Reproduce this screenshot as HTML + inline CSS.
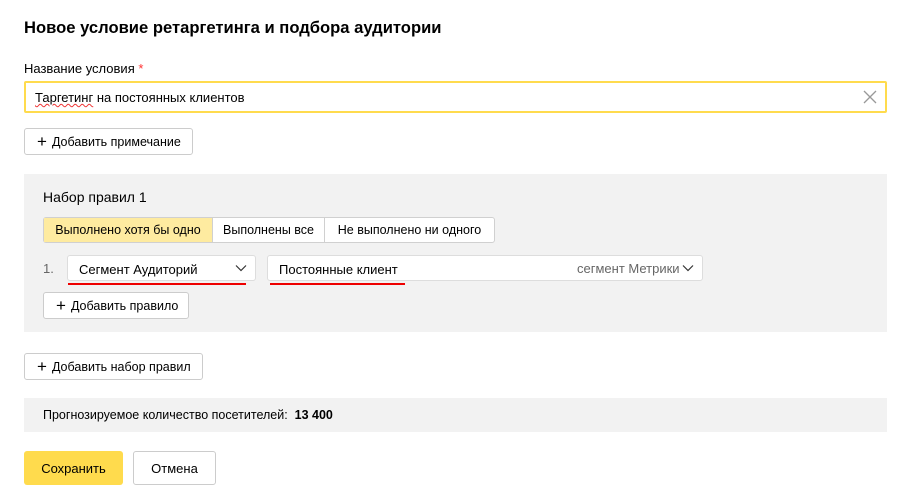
<!DOCTYPE html>
<html><head><meta charset="utf-8"><style>
*{box-sizing:border-box;margin:0;padding:0}
body{width:900px;height:494px;background:#fff;font-family:"Liberation Sans","Noto Sans CJK SC",sans-serif;color:#000;position:relative;overflow:hidden;font-size:13px}
.a{position:absolute;white-space:nowrap}
.btn{position:absolute;border:1px solid #ccc;border-radius:3px;background:#fff;display:flex;align-items:center;padding-left:12px;font-size:12.5px}
.btn .p{font-size:17px;margin-right:5px;line-height:1}
</style></head><body>
<div class="a" style="left:24px;top:18px;font-size:16.6px;font-weight:bold">Новое условие ретаргетинга и подбора аудитории</div>
<div class="a" style="left:24px;top:61px;font-size:13px">Название условия <span style="color:#f33">*</span></div>
<div class="a" style="left:24px;top:81px;width:863px;height:32px;border:2px solid #ffdb4d;border-radius:2px"></div>
<div class="a" style="left:35px;top:90px;font-size:13px"><span style="text-decoration:underline wavy #e33;text-decoration-thickness:1px">Таргетинг</span> на постоянных клиентов</div>
<svg class="a" style="left:863px;top:90px" width="14" height="14"><path d="M1 1L13 13M13 1L1 13" stroke="#999" stroke-width="1.3"/></svg>
<div class="btn" style="left:24px;top:128px;width:169px;height:27px"><span class="p">+</span>Добавить примечание</div>

<div class="a" style="left:24px;top:174px;width:863px;height:158px;background:#f2f2f2"></div>
<div class="a" style="left:43px;top:189px;font-size:14px">Набор правил 1</div>
<div class="a" style="left:43px;top:217px;width:452px;height:26px;border:1px solid #d0d0d0;border-radius:3px;background:#fff;display:flex;font-size:12.5px">
<div style="width:169px;background:#feeba0;display:flex;align-items:center;justify-content:center;border-right:1px solid #d0d0d0">Выполнено хотя бы одно</div>
<div style="width:112px;display:flex;align-items:center;justify-content:center;border-right:1px solid #d0d0d0">Выполнены все</div>
<div style="flex:1;display:flex;align-items:center;justify-content:center">Не выполнено ни одного</div>
</div>
<div class="a" style="left:43px;top:261px;color:#666">1.</div>
<div class="a" style="left:67px;top:255px;width:189px;height:26px;border:1px solid #ddd;border-radius:3px;background:#fff;padding:6px 0 0 11px">Сегмент Аудиторий</div>
<svg class="a" style="left:235px;top:264px" width="12" height="8"><path d="M1 1.5L6 6.5L11 1.5" stroke="#333" fill="none" stroke-width="1.2"/></svg>
<div class="a" style="left:267px;top:255px;width:436px;height:26px;border:1px solid #ddd;border-radius:3px;background:#fff;padding:6px 0 0 11px">Постоянные клиент</div>
<div class="a" style="left:577px;top:261px;color:#666">сегмент Метрики</div>
<svg class="a" style="left:682px;top:264px" width="12" height="8"><path d="M1 1.5L6 6.5L11 1.5" stroke="#333" fill="none" stroke-width="1.2"/></svg>
<div class="a" style="left:68px;top:283px;width:178px;height:2px;background:#e00"></div>
<div class="a" style="left:270px;top:283px;width:135px;height:2px;background:#e00"></div>
<div class="btn" style="left:43px;top:292px;width:146px;height:27px;background:#fff"><span class="p">+</span>Добавить правило</div>

<div class="btn" style="left:24px;top:353px;width:179px;height:27px"><span class="p">+</span>Добавить набор правил</div>
<div class="a" style="left:24px;top:398px;width:863px;height:34px;background:#f2f2f2"></div>
<div class="a" style="left:43px;top:408px;font-size:12.5px">Прогнозируемое количество посетителей: &nbsp;<b>13 400</b></div>
<div class="a" style="left:24px;top:451px;width:99px;height:34px;background:#ffdb4d;border-radius:3px;display:flex;align-items:center;justify-content:center;font-size:13px">Сохранить</div>
<div class="a" style="left:133px;top:451px;width:83px;height:34px;border:1px solid #ccc;border-radius:3px;display:flex;align-items:center;justify-content:center;font-size:13px">Отмена</div>
</body></html>
